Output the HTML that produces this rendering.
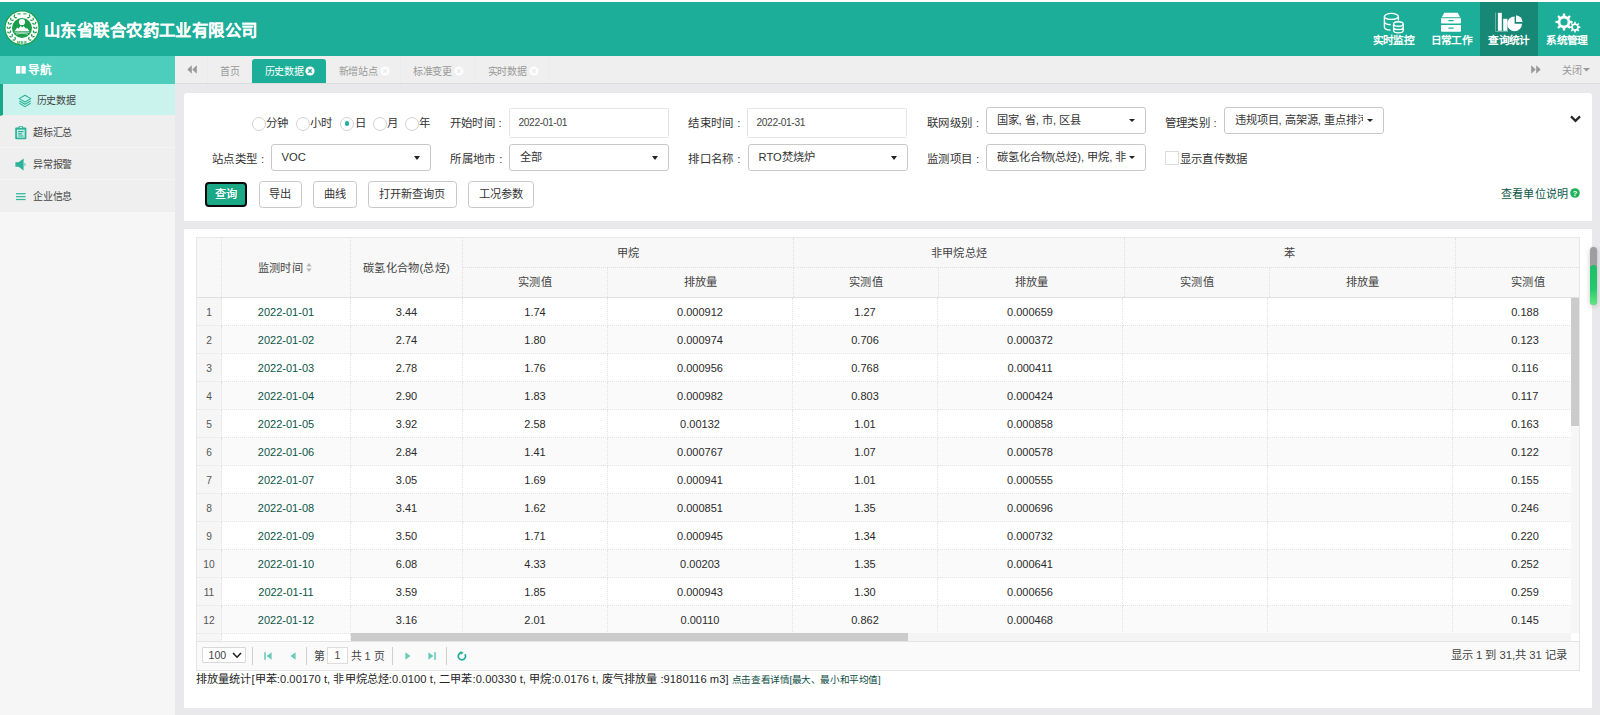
<!DOCTYPE html>
<html lang="zh-CN">
<head>
<meta charset="utf-8">
<title>山东省联合农药工业有限公司</title>
<style>
*{box-sizing:border-box;margin:0;padding:0}
html,body{width:1600px;height:715px;overflow:hidden}
body{position:relative;background:#e9e9ec;font-family:"Liberation Sans",sans-serif;font-size:11.5px;color:#333}
.abs{position:absolute}
.nw{white-space:nowrap;overflow:hidden}
/* header */
#topstrip{left:0;top:0;width:1600px;height:2px;background:#fdfdfd}
#header{left:0;top:2px;width:1600px;height:54px;background:#1cae98}
#title{left:44px;top:15.6px;width:216px;height:24px;line-height:24px;font-family:"Liberation Sans",sans-serif;font-weight:bold;font-size:16.4px;color:#fff;letter-spacing:0.42px;text-shadow:0 0 0.5px #fff}
.nav{top:0;width:58px;height:54px}
.nav.on{background:#178875}
.nav span{position:absolute;left:-1px;top:32px;width:60px;text-align:center;font-size:10.7px;letter-spacing:-0.65px;line-height:13px;color:#fff;font-weight:bold;white-space:nowrap;overflow:hidden}
/* sidebar */
#side{left:0;top:56px;width:175px;height:659px;background:#f6f6f6}
#navhead{left:0;top:0;width:175px;height:28px;background:#4dcdbc}
#navhead span{position:absolute;left:28px;top:7px;width:30px;font-size:11.6px;line-height:13px;font-weight:bold;color:#fff;white-space:nowrap}
.mi{left:0;width:175px;height:32px;background:#efefef;border-bottom:1px solid #f3f3f3}
.mi span{position:absolute;left:33px;top:10px;width:48px;font-size:10px;line-height:13px;color:#444;white-space:nowrap;letter-spacing:-0.2px}
.mi.on{background:#c9f3ec;border-left:3px solid #17a68a;border-bottom:1px solid #efefef}
.mi.on span{left:33.5px;top:9.5px}
/* tabbar */
#tabbar{left:175px;top:56px;width:1425px;height:28px;background:#efefef;border-bottom:1px solid #dcdcdc}
.tab{top:0;height:27px;border-right:1px solid #ebebeb;font-size:10px;line-height:13px;color:#999}
.tab span{position:absolute;top:8.5px;white-space:nowrap;letter-spacing:-0.3px}
.tab.on{background:#1cae98;color:#fff;top:3px;height:24px;border-radius:3px 3px 0 0;border:none}
.tab.on span{top:5.5px}

/* form */
.lb{height:14px;line-height:14px;font-size:11.4px;letter-spacing:0.35px;color:#333;white-space:nowrap}
.rd{margin:-0.5px 0 0 -0.4px;width:14px;height:14px;border:1px solid #d2d2d2;border-radius:50%;background:#fff}
.rd.on:after{content:"";position:absolute;left:3.6px;top:3.6px;width:4.8px;height:4.8px;border-radius:50%;background:#1bb0a0}
.inp{height:30px;border:1px solid #e5e6e7;border-radius:1.5px;background:#fff;font-size:10.2px;letter-spacing:-0.36px;line-height:28px;padding-left:8.5px;color:#444;white-space:nowrap}
.sel{height:26.6px;border:1px solid #c9c9c9;border-radius:3px;background:#fff;font-size:11.2px;line-height:25.4px;padding-left:9.5px;color:#333;white-space:nowrap;overflow:hidden}
.sel i{position:absolute;right:9.6px;top:10.8px;width:0;height:0;border-left:3.7px solid transparent;border-right:3.7px solid transparent;border-top:4px solid #222}
.sel b+i{right:9.6px;top:11px;border-left-width:3.1px;border-right-width:3.1px;border-top-width:3.5px}
.sel b{display:block;font-weight:normal;overflow:hidden;white-space:nowrap}
.btn{top:88px;height:27px;border:1px solid #c8c8c8;border-radius:3.5px;background:#fff;font-size:11.2px;line-height:25px;text-align:center;color:#333;white-space:nowrap;overflow:hidden}
.btn.pri{top:89px;height:25.4px;background:#1aa886;color:#fff;border:2px solid #0a0a0a;border-radius:4px;line-height:21.5px;text-shadow:0 0 0.6px #fff}

/* table */
#tb{left:12px;top:8px;width:1384px;height:404px;overflow:hidden;border:1px solid #e7e7e7;border-bottom:none}
.hc{background:#f8f8f8;border-right:1px dotted #e0e0e0;border-bottom:1px dotted #e0e0e0;text-align:center;font-size:11.2px;letter-spacing:0.3px;color:#444;white-space:nowrap;overflow:hidden}
.r{left:0;height:28px;width:1383px}
.r div{position:absolute;top:0;height:28px;line-height:29.4px;text-align:center;font-size:11px;color:#2b2b2b;border-right:1px dotted #e3e3e3;border-bottom:1px dotted #e3e3e3;white-space:nowrap;overflow:hidden;background:#fff}
.r.e div{background:#fafafa}
.r div.n{background:#f6f6f6;color:#555;font-size:10.2px}
.r div.d{color:#0c5546}
#pg{left:12px;top:412px;width:1384px;height:30px;background:#fafafa;border:1px solid #e4e4e4;font-size:10.8px;color:#444}
.sep{top:4.5px;width:1px;height:18.5px;background:#cfcfcf}
/* panels */
.panel{background:#fff}
#p1{border-radius:3px 3px 0 0}
</style>
</head>
<body>
<div id="topstrip" class="abs"></div>
<div id="header" class="abs">
  <svg class="abs" style="left:3.8px;top:7.5px" width="36" height="36" viewBox="-18 -18 36 36">
    <circle r="17.6" fill="#1b9e4b"/><circle r="16.4" fill="#fff"/>
    <g fill="#1b9e4b"><g><ellipse cx="6.82" cy="10.11" rx="1.5" ry="0.7" transform="rotate(-74.0 6.82 10.11)"/><ellipse cx="8.05" cy="11.94" rx="1.5" ry="0.7" transform="rotate(6.0 8.05 11.94)"/><ellipse cx="9.74" cy="7.34" rx="1.5" ry="0.7" transform="rotate(-93.0 9.74 7.34)"/><ellipse cx="11.50" cy="8.67" rx="1.5" ry="0.7" transform="rotate(-13.0 11.50 8.67)"/><ellipse cx="11.60" cy="3.77" rx="1.5" ry="0.7" transform="rotate(-112.0 11.60 3.77)"/><ellipse cx="13.70" cy="4.45" rx="1.5" ry="0.7" transform="rotate(-32.0 13.70 4.45)"/><ellipse cx="12.20" cy="-0.21" rx="1.5" ry="0.7" transform="rotate(-131.0 12.20 -0.21)"/><ellipse cx="14.40" cy="-0.25" rx="1.5" ry="0.7" transform="rotate(-51.0 14.40 -0.25)"/><ellipse cx="11.46" cy="-4.17" rx="1.5" ry="0.7" transform="rotate(-150.0 11.46 -4.17)"/><ellipse cx="13.53" cy="-4.93" rx="1.5" ry="0.7" transform="rotate(-70.0 13.53 -4.93)"/><ellipse cx="9.48" cy="-7.68" rx="1.5" ry="0.7" transform="rotate(-169.0 9.48 -7.68)"/><ellipse cx="11.19" cy="-9.06" rx="1.5" ry="0.7" transform="rotate(-89.0 11.19 -9.06)"/><ellipse cx="6.47" cy="-10.35" rx="1.5" ry="0.7" transform="rotate(-188.0 6.47 -10.35)"/><ellipse cx="7.63" cy="-12.21" rx="1.5" ry="0.7" transform="rotate(-108.0 7.63 -12.21)"/></g><g transform="scale(-1,1)"><ellipse cx="6.82" cy="10.11" rx="1.5" ry="0.7" transform="rotate(-74.0 6.82 10.11)"/><ellipse cx="8.05" cy="11.94" rx="1.5" ry="0.7" transform="rotate(6.0 8.05 11.94)"/><ellipse cx="9.74" cy="7.34" rx="1.5" ry="0.7" transform="rotate(-93.0 9.74 7.34)"/><ellipse cx="11.50" cy="8.67" rx="1.5" ry="0.7" transform="rotate(-13.0 11.50 8.67)"/><ellipse cx="11.60" cy="3.77" rx="1.5" ry="0.7" transform="rotate(-112.0 11.60 3.77)"/><ellipse cx="13.70" cy="4.45" rx="1.5" ry="0.7" transform="rotate(-32.0 13.70 4.45)"/><ellipse cx="12.20" cy="-0.21" rx="1.5" ry="0.7" transform="rotate(-131.0 12.20 -0.21)"/><ellipse cx="14.40" cy="-0.25" rx="1.5" ry="0.7" transform="rotate(-51.0 14.40 -0.25)"/><ellipse cx="11.46" cy="-4.17" rx="1.5" ry="0.7" transform="rotate(-150.0 11.46 -4.17)"/><ellipse cx="13.53" cy="-4.93" rx="1.5" ry="0.7" transform="rotate(-70.0 13.53 -4.93)"/><ellipse cx="9.48" cy="-7.68" rx="1.5" ry="0.7" transform="rotate(-169.0 9.48 -7.68)"/><ellipse cx="11.19" cy="-9.06" rx="1.5" ry="0.7" transform="rotate(-89.0 11.19 -9.06)"/><ellipse cx="6.47" cy="-10.35" rx="1.5" ry="0.7" transform="rotate(-188.0 6.47 -10.35)"/><ellipse cx="7.63" cy="-12.21" rx="1.5" ry="0.7" transform="rotate(-108.0 7.63 -12.21)"/></g><rect x="-4.6" y="-14.6" width="3.4" height="1"/><rect x="1.2" y="-14.6" width="3.4" height="1"/></g>
    <circle r="10" fill="#1b9e4b"/>
    <circle cx="0" cy="-6" r="3.1" fill="#fff"/>
    <path d="M-7.4 3 L-4.6 -0.4 L-3.5 0.7 L-1.2 -2.3 L0.2 -0.5 L1.7 -2.1 L4 0.7 L5 0 L7.4 3Z" fill="#fff"/>
    <path d="M-7.4 4.1 H7.4" stroke="#fff" stroke-width="0.8" fill="none"/><path d="M-6 6.1 Q0 4.5 6 6.1" stroke="#c8ecd4" stroke-width="0.8" fill="none"/>
    <text x="0" y="15.5" font-family="Liberation Sans" font-size="4.2" font-weight="bold" fill="#1b9e4b" text-anchor="middle" letter-spacing="0.5">MEE</text>
  </svg>
  <div id="title" class="abs nw">山东省联合农药工业有限公司</div>
  <div class="abs nav" style="left:1364.5px"><svg class="abs" style="left:18px;top:10px" width="22" height="22" viewBox="0 0 22 22" fill="none" stroke="#fff" stroke-width="1.4"><ellipse cx="8.4" cy="4.4" rx="7" ry="3"/><path d="M1.4 4.4 V15 C1.4 16.8 4.4 18 7.6 18.1 M15.4 4.4 V8.6 M1.4 9.6 C1.4 11.4 4.4 12.6 7.6 12.7"/><ellipse cx="15.4" cy="12" rx="4.8" ry="2.2"/><path d="M10.6 12 V18.6 C10.6 20 12.8 20.9 15.4 20.9 C18 20.9 20.2 20 20.2 18.6 V12 M10.6 15.2 C10.6 16.6 12.8 17.5 15.4 17.5 C18 17.5 20.2 16.6 20.2 15.2"/></svg><span>实时监控</span></div>
  <div class="abs nav" style="left:1422.5px"><svg class="abs" style="left:17.3px;top:10px" width="22" height="22" viewBox="0 0 22 22" fill="#fff"><path d="M4.2 0.8 H17.8 L20.2 5.2 H1.8 Z"/><path d="M1 6.2 H21 V10.4 Q21 11.4 20 11.4 H2 Q1 11.4 1 10.4 Z M8.4 8 V9.3 H13.6 V8Z" fill-rule="evenodd"/><path d="M1 14 Q1 13 2 13 H20 Q21 13 21 14 V18.8 Q21 19.8 20 19.8 H2 Q1 19.8 1 18.8 Z M8.4 15.4 V16.7 H13.6 V15.4Z" fill-rule="evenodd"/></svg><span>日常工作</span></div>
  <div class="abs nav on" style="left:1480px"><svg class="abs" style="left:15px;top:10px" width="28" height="22" viewBox="0 0 28 22" fill="#fff"><path d="M0.5 0.6 H1 V19.3 H13 V19.8 H0.5Z" opacity="0.7"/><rect x="2.9" y="0.8" width="3.9" height="18"/><rect x="8.2" y="6.8" width="4.2" height="12"/><path d="M19.6 4.4 A7.4 7.4 0 1 0 27 11.8 H19.6Z"/><path d="M21 3.2 A7.2 7.2 0 0 1 27.6 10 H21Z" opacity="0.95"/></svg><span>查询统计</span></div>
  <div class="abs nav" style="left:1538px"><svg class="abs" style="left:16.7px;top:10.5px" width="27" height="21" viewBox="0 0 27 21" fill="#fff" fill-rule="evenodd"><path d="M15.15 7.63 L17.53 7.92 L17.53 10.08 L15.15 10.37 L14.32 12.38 L15.80 14.27 L14.27 15.80 L12.38 14.32 L10.37 15.15 L10.08 17.53 L7.92 17.53 L7.63 15.15 L5.62 14.32 L3.73 15.80 L2.20 14.27 L3.68 12.38 L2.85 10.37 L0.47 10.08 L0.47 7.92 L2.85 7.63 L3.68 5.62 L2.20 3.73 L3.73 2.20 L5.62 3.68 L7.63 2.85 L7.92 0.47 L10.08 0.47 L10.37 2.85 L12.38 3.68 L14.27 2.20 L15.80 3.73 L14.32 5.62Z M5.40 9.00 a3.60 3.60 0 1 0 7.20 0 a3.60 3.60 0 1 0 -7.20 0Z"/><path d="M23.81 13.35 L25.36 13.52 L25.36 14.88 L23.81 15.05 L23.29 16.29 L24.27 17.51 L23.31 18.47 L22.09 17.49 L20.85 18.01 L20.68 19.56 L19.32 19.56 L19.15 18.01 L17.91 17.49 L16.69 18.47 L15.73 17.51 L16.71 16.29 L16.19 15.05 L14.64 14.88 L14.64 13.52 L16.19 13.35 L16.71 12.11 L15.73 10.89 L16.69 9.93 L17.91 10.91 L19.15 10.39 L19.32 8.84 L20.68 8.84 L20.85 10.39 L22.09 10.91 L23.31 9.93 L24.27 10.89 L23.29 12.11Z M17.90 14.20 a2.10 2.10 0 1 0 4.20 0 a2.10 2.10 0 1 0 -4.20 0Z"/></svg><span>系统管理</span></div>
</div>
<div id="side" class="abs">
  <div id="navhead" class="abs"><svg class="abs" style="left:16px;top:9.5px" width="10" height="8" viewBox="0 0 10 8" fill="#fff"><rect x="0" y="0" width="4.4" height="7.6"/><rect x="5.4" y="0" width="4.4" height="7.6"/></svg><span>导航</span></div>
  <div class="abs mi on" style="top:28px"><svg class="abs" style="left:14.6px;top:9.6px" width="14" height="14" viewBox="0 0 14 14" fill="none" stroke="#2bb39a" stroke-width="1.1" stroke-linejoin="round"><path d="M7 1.2 L12.8 4.6 L7 8 L1.2 4.6Z"/><path d="M1.4 7 L7 10.3 L12.6 7 M1.4 9.3 L7 12.6 L12.6 9.3"/></svg><span>历史数据</span></div>
  <div class="abs mi" style="top:60px"><svg class="abs" style="left:14.8px;top:9.6px" width="12" height="14" viewBox="0 0 12 14"><rect x="0.2" y="1.6" width="11.2" height="11.6" rx="1" fill="#2bb39a"/><rect x="1.9" y="3.6" width="7.8" height="8" fill="#c9ebe4"/><rect x="3.4" y="0.2" width="4.8" height="2.6" rx="0.6" fill="#2bb39a"/><rect x="4.6" y="1" width="2.4" height="1" fill="#c9ebe4"/><path d="M3.2 5.6 H8.4 M3.2 7.9 H7 M3.2 10 H8.4" stroke="#2bb39a" stroke-width="1.1"/></svg><span>超标汇总</span></div>
  <div class="abs mi" style="top:92px"><svg class="abs" style="left:15px;top:9.5px" width="12" height="13" viewBox="0 0 12 13" fill="#2bb39a"><path d="M0.4 4.2 H3.6 L8.6 0.4 V12.6 L3.6 8.8 H0.4Z"/><path d="M9.6 5.2 Q11 6.5 9.6 7.8" fill="none" stroke="#2bb39a" stroke-width="0.9"/></svg><span>异常报警</span></div>
  <div class="abs mi" style="top:124px;border-bottom:none"><svg class="abs" style="left:15.7px;top:12.6px" width="10" height="8" viewBox="0 0 10 8" fill="#35b8a0"><rect x="0" y="0.1" width="9.6" height="1.25"/><rect x="0" y="3" width="9.6" height="1.25"/><rect x="0" y="5.9" width="9.6" height="1.25"/></svg><span>企业信息</span></div>
</div>
<div id="tabbar" class="abs">
  <div class="abs tab" style="left:0;width:32.5px"><svg class="abs" style="left:12px;top:8.7px" width="10" height="9" viewBox="0 0 10 9" fill="#999"><path d="M4.8 0.3 V8.7 L0.3 4.5Z M9.8 0.3 V8.7 L5.3 4.5Z"/></svg></div>
  <div class="abs tab" style="left:32.5px;width:44.5px"><span style="left:12.5px">首页</span></div>
  <div class="abs tab on" style="left:77px;width:74px"><span style="left:12.5px">历史数据</span><svg class="abs" style="left:53px;top:6.5px" width="10" height="10" viewBox="0 0 10 10"><circle cx="5" cy="5" r="4.6" fill="#fff"/><path d="M3.3 3.3 L6.7 6.7 M6.7 3.3 L3.3 6.7" stroke="#1cae98" stroke-width="1.4"/></svg></div>
  <div class="abs tab" style="left:151px;width:74.5px"><span style="left:12.5px">新增站点</span><svg class="abs" style="left:53.5px;top:9.5px" width="10" height="10" viewBox="0 0 10 10"><circle cx="5" cy="5" r="4.6" fill="#fdfdfd"/><path d="M3.3 3.3 L6.7 6.7 M6.7 3.3 L3.3 6.7" stroke="#ececec" stroke-width="1.4"/></svg></div>
  <div class="abs tab" style="left:225.5px;width:74.5px"><span style="left:12.5px">标准变更</span><svg class="abs" style="left:53.5px;top:9.5px" width="10" height="10" viewBox="0 0 10 10"><circle cx="5" cy="5" r="4.6" fill="#fdfdfd"/><path d="M3.3 3.3 L6.7 6.7 M6.7 3.3 L3.3 6.7" stroke="#ececec" stroke-width="1.4"/></svg></div>
  <div class="abs tab" style="left:300px;width:74.5px"><span style="left:12.5px">实时数据</span><svg class="abs" style="left:53.5px;top:9.5px" width="10" height="10" viewBox="0 0 10 10"><circle cx="5" cy="5" r="4.6" fill="#fdfdfd"/><path d="M3.3 3.3 L6.7 6.7 M6.7 3.3 L3.3 6.7" stroke="#ececec" stroke-width="1.4"/></svg></div>
  <svg class="abs" style="left:1356px;top:8.7px" width="10" height="9" viewBox="0 0 10 9" fill="#999"><path d="M0.2 0.3 V8.7 L4.7 4.5Z M5.2 0.3 V8.7 L9.7 4.5Z"/></svg>
  <div class="abs" style="left:1387px;top:7.8px;width:22px;font-size:10px;line-height:13px;color:#999;white-space:nowrap;letter-spacing:-0.3px">关闭</div>
  <svg class="abs" style="left:1408px;top:12.2px" width="7" height="4" viewBox="0 0 7 4" fill="#999"><path d="M0 0 H7 L3.5 3.6Z"/></svg>
</div>
<div id="p1" class="abs panel" style="left:184px;top:93px;width:1408px;height:128px">
  <div class="abs rd" style="left:67.9px;top:24.2px"></div><div class="abs lb" style="left:82.0px;top:23.2px">分钟</div>
  <div class="abs rd" style="left:112.0px;top:24.2px"></div><div class="abs lb" style="left:126.0px;top:23.2px">小时</div>
  <div class="abs rd on" style="left:156.3px;top:24.2px"></div><div class="abs lb" style="left:171.0px;top:23.2px">日</div>
  <div class="abs rd" style="left:189.0px;top:24.2px"></div><div class="abs lb" style="left:203.0px;top:23.2px">月</div>
  <div class="abs rd" style="left:221.5px;top:24.2px"></div><div class="abs lb" style="left:235.4px;top:23.2px">年</div>
  <div class="abs lb" style="left:265.6px;top:23.0px">开始时间 :</div>
  <div class="abs inp" style="left:325.0px;top:15px;width:160px">2022-01-01</div>
  <div class="abs lb" style="left:504.4px;top:23.0px">结束时间 :</div>
  <div class="abs inp" style="left:563.0px;top:15px;width:160px">2022-01-31</div>
  <div class="abs lb" style="left:743.0px;top:22.6px">联网级别 :</div>
  <div class="abs sel" style="left:802.0px;top:14.0px;width:160.0px"><b style="width:128px">国家, 省, 市, 区县</b><i></i></div>
  <div class="abs lb" style="left:980.6px;top:22.6px">管理类别 :</div>
  <div class="abs sel" style="left:1040.0px;top:14.0px;width:159.5px"><b style="width:128px">违规项目, 高架源, 重点排污单位</b><i></i></div>
  <div class="abs lb" style="left:28.0px;top:58.5px">站点类型 :</div>
  <div class="abs sel" style="left:87.0px;top:51.0px;width:160.0px">VOC<i></i></div>
  <div class="abs lb" style="left:266.3px;top:58.5px">所属地市 :</div>
  <div class="abs sel" style="left:325.0px;top:51.0px;width:160.0px">全部<i></i></div>
  <div class="abs lb" style="left:504.4px;top:58.5px">排口名称 :</div>
  <div class="abs sel" style="left:564.0px;top:51.0px;width:159.5px">RTO焚烧炉<i></i></div>
  <div class="abs lb" style="left:743.0px;top:58.5px">监测项目 :</div>
  <div class="abs sel" style="left:802.0px;top:51.0px;width:160.0px"><b style="width:129px">碳氢化合物(总烃), 甲烷, 非甲烷总烃</b><i></i></div>
  <div class="abs" style="left:981px;top:58px;width:13.5px;height:14px;border:1px solid #dcdcdc;background:#fff"></div>
  <div class="abs lb" style="left:995.6px;top:58.5px">显示直传数据</div>
  <svg class="abs" style="left:1385.5px;top:22.4px" width="11" height="8" viewBox="0 0 11 8" fill="none" stroke="#2a2a2a" stroke-width="2.3"><path d="M1 1.4 L5.5 5.8 L10 1.4"/></svg>
  <div class="abs btn pri" style="left:21.0px;width:42.0px">查询</div>
  <div class="abs btn" style="left:75.0px;width:42.8px">导出</div>
  <div class="abs btn" style="left:129.0px;width:43.7px">曲线</div>
  <div class="abs btn" style="left:184.0px;width:88.7px">打开新查询页</div>
  <div class="abs btn" style="left:284.0px;width:66.0px">工况参数</div>
  <div class="abs lb" style="left:1316.6px;top:93.5px;color:#0c5647;font-size:11.1px">查看单位说明</div>
  <svg class="abs" style="left:1385.7px;top:95.3px" width="10" height="10" viewBox="0 0 10 10"><circle cx="5" cy="5" r="4.8" fill="#1fb25a"/><text x="5" y="8" font-family="Liberation Sans" font-weight="bold" font-size="8" fill="#fff" text-anchor="middle">?</text></svg>
</div>
<div id="p2" class="abs panel" style="left:184px;top:229px;width:1408px;height:479px">
<div id="tb" class="abs">
  <div class="abs hc" style="left:0px;top:0px;width:25px;height:59px;line-height:60px;border-bottom:none"></div>
  <div class="abs hc" style="left:25px;top:0px;width:129px;height:59px;line-height:60px;border-bottom:none;padding-right:2px">监测时间<svg style="display:inline-block;vertical-align:0;margin-left:3px" width="6" height="9" viewBox="0 0 6 9" fill="#b8b8b8"><path d="M3 0 L5.8 3.6 H0.2Z M3 9 L5.8 5.4 H0.2Z"/></svg></div>
  <div class="abs hc" style="left:154px;top:0px;width:112px;height:59px;line-height:60px;border-bottom:none">碳氢化合物(总烃)</div>
  <div class="abs hc" style="left:266px;top:0px;width:331px;height:30px;line-height:30px">甲烷</div>
  <div class="abs hc" style="left:266px;top:30px;width:145px;height:29px;line-height:28px;border-bottom:none">实测值</div>
  <div class="abs hc" style="left:411px;top:30px;width:186px;height:29px;line-height:28px;border-bottom:none">排放量</div>
  <div class="abs hc" style="left:597px;top:0px;width:331px;height:30px;line-height:30px">非甲烷总烃</div>
  <div class="abs hc" style="left:597px;top:30px;width:145px;height:29px;line-height:28px;border-bottom:none">实测值</div>
  <div class="abs hc" style="left:742px;top:30px;width:186px;height:29px;line-height:28px;border-bottom:none">排放量</div>
  <div class="abs hc" style="left:928px;top:0px;width:331px;height:30px;line-height:30px">苯</div>
  <div class="abs hc" style="left:928px;top:30px;width:145px;height:29px;line-height:28px;border-bottom:none">实测值</div>
  <div class="abs hc" style="left:1073px;top:30px;width:186px;height:29px;line-height:28px;border-bottom:none">排放量</div>
  <div class="abs hc" style="left:1259px;top:0px;width:331px;height:30px;line-height:30px">甲苯</div>
  <div class="abs hc" style="left:1259px;top:30px;width:145px;height:29px;line-height:28px;border-bottom:none">实测值</div>
  <div class="abs" style="left:0;top:59px;width:1383px;height:1px;background:#e0e0e0"></div>
  <div class="abs r" style="top:60px"><div class="n" style="left:0px;width:25px">1</div><div class="d" style="left:25px;width:129px">2022-01-01</div><div style="left:154px;width:112px">3.44</div><div style="left:266px;width:145px">1.74</div><div style="left:411px;width:185px">0.000912</div><div style="left:596px;width:145px">1.27</div><div style="left:741px;width:185px">0.000659</div><div style="left:926px;width:145px"></div><div style="left:1071px;width:185px"></div><div style="left:1256px;width:145px">0.188</div></div>
  <div class="abs r e" style="top:88px"><div class="n" style="left:0px;width:25px">2</div><div class="d" style="left:25px;width:129px">2022-01-02</div><div style="left:154px;width:112px">2.74</div><div style="left:266px;width:145px">1.80</div><div style="left:411px;width:185px">0.000974</div><div style="left:596px;width:145px">0.706</div><div style="left:741px;width:185px">0.000372</div><div style="left:926px;width:145px"></div><div style="left:1071px;width:185px"></div><div style="left:1256px;width:145px">0.123</div></div>
  <div class="abs r" style="top:116px"><div class="n" style="left:0px;width:25px">3</div><div class="d" style="left:25px;width:129px">2022-01-03</div><div style="left:154px;width:112px">2.78</div><div style="left:266px;width:145px">1.76</div><div style="left:411px;width:185px">0.000956</div><div style="left:596px;width:145px">0.768</div><div style="left:741px;width:185px">0.000411</div><div style="left:926px;width:145px"></div><div style="left:1071px;width:185px"></div><div style="left:1256px;width:145px">0.116</div></div>
  <div class="abs r e" style="top:144px"><div class="n" style="left:0px;width:25px">4</div><div class="d" style="left:25px;width:129px">2022-01-04</div><div style="left:154px;width:112px">2.90</div><div style="left:266px;width:145px">1.83</div><div style="left:411px;width:185px">0.000982</div><div style="left:596px;width:145px">0.803</div><div style="left:741px;width:185px">0.000424</div><div style="left:926px;width:145px"></div><div style="left:1071px;width:185px"></div><div style="left:1256px;width:145px">0.117</div></div>
  <div class="abs r" style="top:172px"><div class="n" style="left:0px;width:25px">5</div><div class="d" style="left:25px;width:129px">2022-01-05</div><div style="left:154px;width:112px">3.92</div><div style="left:266px;width:145px">2.58</div><div style="left:411px;width:185px">0.00132</div><div style="left:596px;width:145px">1.01</div><div style="left:741px;width:185px">0.000858</div><div style="left:926px;width:145px"></div><div style="left:1071px;width:185px"></div><div style="left:1256px;width:145px">0.163</div></div>
  <div class="abs r e" style="top:200px"><div class="n" style="left:0px;width:25px">6</div><div class="d" style="left:25px;width:129px">2022-01-06</div><div style="left:154px;width:112px">2.84</div><div style="left:266px;width:145px">1.41</div><div style="left:411px;width:185px">0.000767</div><div style="left:596px;width:145px">1.07</div><div style="left:741px;width:185px">0.000578</div><div style="left:926px;width:145px"></div><div style="left:1071px;width:185px"></div><div style="left:1256px;width:145px">0.122</div></div>
  <div class="abs r" style="top:228px"><div class="n" style="left:0px;width:25px">7</div><div class="d" style="left:25px;width:129px">2022-01-07</div><div style="left:154px;width:112px">3.05</div><div style="left:266px;width:145px">1.69</div><div style="left:411px;width:185px">0.000941</div><div style="left:596px;width:145px">1.01</div><div style="left:741px;width:185px">0.000555</div><div style="left:926px;width:145px"></div><div style="left:1071px;width:185px"></div><div style="left:1256px;width:145px">0.155</div></div>
  <div class="abs r e" style="top:256px"><div class="n" style="left:0px;width:25px">8</div><div class="d" style="left:25px;width:129px">2022-01-08</div><div style="left:154px;width:112px">3.41</div><div style="left:266px;width:145px">1.62</div><div style="left:411px;width:185px">0.000851</div><div style="left:596px;width:145px">1.35</div><div style="left:741px;width:185px">0.000696</div><div style="left:926px;width:145px"></div><div style="left:1071px;width:185px"></div><div style="left:1256px;width:145px">0.246</div></div>
  <div class="abs r" style="top:284px"><div class="n" style="left:0px;width:25px">9</div><div class="d" style="left:25px;width:129px">2022-01-09</div><div style="left:154px;width:112px">3.50</div><div style="left:266px;width:145px">1.71</div><div style="left:411px;width:185px">0.000945</div><div style="left:596px;width:145px">1.34</div><div style="left:741px;width:185px">0.000732</div><div style="left:926px;width:145px"></div><div style="left:1071px;width:185px"></div><div style="left:1256px;width:145px">0.220</div></div>
  <div class="abs r e" style="top:312px"><div class="n" style="left:0px;width:25px">10</div><div class="d" style="left:25px;width:129px">2022-01-10</div><div style="left:154px;width:112px">6.08</div><div style="left:266px;width:145px">4.33</div><div style="left:411px;width:185px">0.00203</div><div style="left:596px;width:145px">1.35</div><div style="left:741px;width:185px">0.000641</div><div style="left:926px;width:145px"></div><div style="left:1071px;width:185px"></div><div style="left:1256px;width:145px">0.252</div></div>
  <div class="abs r" style="top:340px"><div class="n" style="left:0px;width:25px">11</div><div class="d" style="left:25px;width:129px">2022-01-11</div><div style="left:154px;width:112px">3.59</div><div style="left:266px;width:145px">1.85</div><div style="left:411px;width:185px">0.000943</div><div style="left:596px;width:145px">1.30</div><div style="left:741px;width:185px">0.000656</div><div style="left:926px;width:145px"></div><div style="left:1071px;width:185px"></div><div style="left:1256px;width:145px">0.259</div></div>
  <div class="abs r e" style="top:368px"><div class="n" style="left:0px;width:25px">12</div><div class="d" style="left:25px;width:129px">2022-01-12</div><div style="left:154px;width:112px">3.16</div><div style="left:266px;width:145px">2.01</div><div style="left:411px;width:185px">0.00110</div><div style="left:596px;width:145px">0.862</div><div style="left:741px;width:185px">0.000468</div><div style="left:926px;width:145px"></div><div style="left:1071px;width:185px"></div><div style="left:1256px;width:145px">0.145</div></div>
  <div class="abs r" style="top:396px"><div class="n" style="left:0px;width:25px">13</div><div class="d" style="left:25px;width:129px">2022-01-13</div><div style="left:154px;width:112px">3.22</div><div style="left:266px;width:145px">1.77</div><div style="left:411px;width:185px">0.000968</div><div style="left:596px;width:145px">0.921</div><div style="left:741px;width:185px">0.000503</div><div style="left:926px;width:145px"></div><div style="left:1071px;width:185px"></div><div style="left:1256px;width:145px">0.171</div></div>
  <div class="abs" style="left:154px;top:395px;width:1228px;height:8px;background:#f4f4f4"></div>
  <div class="abs" style="left:154px;top:395px;width:557px;height:8px;background:#cbcbcb"></div>
  <div class="abs" style="left:1374px;top:60px;width:8px;height:335px;background:#f6f6f6"></div>
  <div class="abs" style="left:1374px;top:60px;width:8px;height:128px;background:#cbcbcb"></div>
  <div class="abs" style="left:1374px;top:395px;width:8px;height:8px;background:#fff"></div>
</div>
<div id="pg" class="abs">
  <div class="abs" style="left:5px;top:4.6px;width:44px;height:16.4px;border:1px solid #d8d8d8;background:#fff;border-radius:1px"><span class="abs" style="left:5.5px;top:0;line-height:14.5px;font-size:10.6px;color:#444">100</span><svg class="abs" style="left:28.5px;top:4px" width="10" height="7" viewBox="0 0 10 7" fill="none" stroke="#222" stroke-width="1.6"><path d="M1 1 L5 5.2 L9 1"/></svg></div>
  <div class="abs sep" style="left:54.5px"></div>
  <svg class="abs" style="left:66.5px;top:10px" width="8" height="8" viewBox="0 0 8 8" fill="#6acbb9"><rect x="0.2" y="0.2" width="1.6" height="7.6"/><path d="M7.6 0.2 V7.8 L2.6 4Z"/></svg>
  <svg class="abs" style="left:92.5px;top:10px" width="6" height="8" viewBox="0 0 6 8" fill="#6acbb9"><path d="M5.6 0.2 V7.8 L0.4 4Z"/></svg>
  <div class="abs sep" style="left:108.5px"></div>
  <div class="abs" style="left:116.5px;top:6.5px;line-height:14px;white-space:nowrap">第</div>
  <div class="abs" style="left:130px;top:4.6px;width:21px;height:17px;border:1px solid #ddd;background:#fff;text-align:center;line-height:15px;font-size:10.5px">1</div>
  <div class="abs" style="left:153.5px;top:6.5px;line-height:14px;white-space:nowrap">共 1 页</div>
  <div class="abs sep" style="left:194.5px"></div>
  <svg class="abs" style="left:208px;top:10px" width="6" height="8" viewBox="0 0 6 8" fill="#6acbb9"><path d="M0.4 0.2 V7.8 L5.6 4Z"/></svg>
  <svg class="abs" style="left:231px;top:10px" width="8" height="8" viewBox="0 0 8 8" fill="#6acbb9"><path d="M0.4 0.2 V7.8 L5.4 4Z"/><rect x="6.2" y="0.2" width="1.6" height="7.6"/></svg>
  <div class="abs sep" style="left:248.5px"></div>
  <svg class="abs" style="left:259.5px;top:9px" width="10" height="10" viewBox="0 0 10 10" fill="none" stroke="#1fae98" stroke-width="1.7"><path d="M7.9 3.2 A3.6 3.6 0 1 1 4.2 1.7"/><path d="M3.4 0 L6.6 1.8 L3.8 3.8Z" fill="#1fae98" stroke="none"/></svg>
  <div class="abs" style="right:12px;top:5.8px;line-height:14px;white-space:nowrap;font-size:11.3px;width:130px;text-align:right">显示 1 到 31,共 31 记录</div>
</div>
<div class="abs" style="left:12px;top:443.5px;line-height:13px;font-size:11.15px;letter-spacing:0.08px;color:#262626;white-space:nowrap;width:720px">排放量统计[甲苯:0.00170 t, 非甲烷总烃:0.0100 t, 二甲苯:0.00330 t, 甲烷:0.0176 t, 废气排放量 :9180116 m3] <span style="font-size:9.6px;color:#0b4d3f;letter-spacing:-0.4px">点击查看详情[最大、最小和平均值]</span></div>
</div>
<div class="abs" style="left:1590px;top:246.7px;width:7px;height:58.3px;border-radius:3.5px;background:#9e9e9e;box-shadow:0 1px 5px rgba(0,0,0,.22)"><div class="abs" style="left:0;top:18.3px;width:7px;height:40px;border-radius:3.5px;background:linear-gradient(#1fbd68 0,#27c86e 60%,#62e880 100%)"></div></div>
</body>
</html>
